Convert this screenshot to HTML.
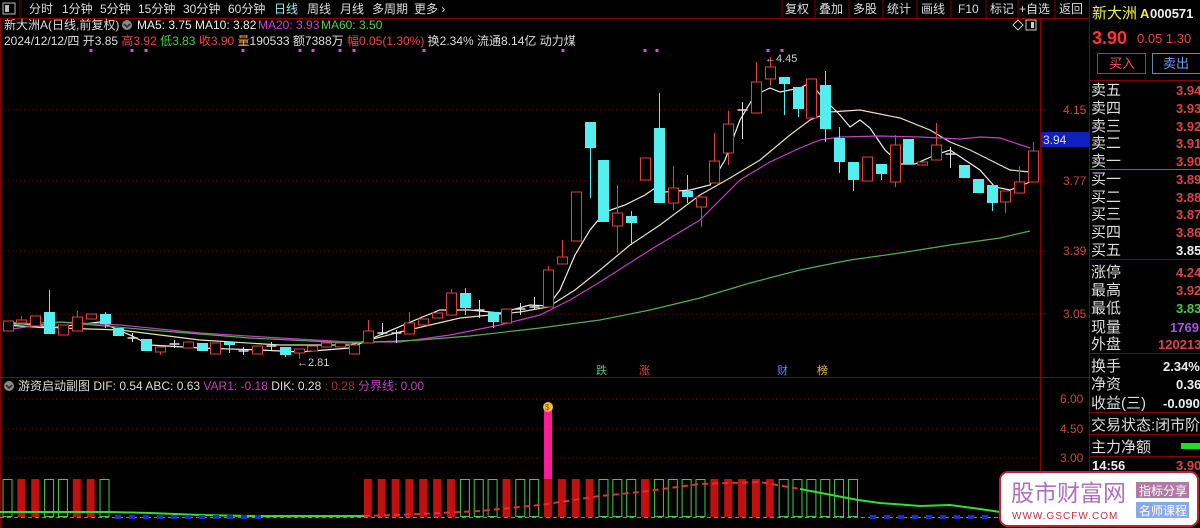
<!DOCTYPE html>
<html><head><meta charset="utf-8">
<style>
html,body{margin:0;padding:0;background:#000;width:1200px;height:528px;overflow:hidden}
svg{display:block}
text{font-family:"Liberation Sans","Noto Sans CJK SC",sans-serif}
</style></head>
<body>
<svg id="s" width="1200" height="528" viewBox="0 0 1200 528" xmlns="http://www.w3.org/2000/svg">
<rect width="1200" height="528" fill="#000"/>
<!-- toolbar -->
<g font-size="12" fill="#ddd">
<rect x="3" y="3" width="12" height="11" fill="none" stroke="#bbb"/><rect x="5" y="5" width="4" height="7" fill="#bbb"/>
<line x1="20" y1="0" x2="20" y2="18" stroke="#800"/>
<text x="29" y="13">分时</text><text x="62" y="13">1分钟</text><text x="100" y="13">5分钟</text><text x="138" y="13">15分钟</text><text x="183" y="13">30分钟</text><text x="228" y="13">60分钟</text>
<text x="274" y="13" fill="#9ee">日线</text><text x="307" y="13">周线</text><text x="340" y="13">月线</text><text x="372" y="13">多周期</text><text x="414" y="13">更多 ›</text>
<text x="785" y="13">复权</text><text x="819" y="13">叠加</text><text x="853" y="13">多股</text><text x="887" y="13">统计</text><text x="921" y="13">画线</text><text x="958" y="13">F10</text><text x="990" y="13">标记</text><text x="1019" y="13">+自选</text><text x="1059" y="13">返回</text>
</g>
<g stroke="#800"><line x1="782" y1="0" x2="782" y2="18"/><line x1="815" y1="0" x2="815" y2="18"/><line x1="849" y1="0" x2="849" y2="18"/><line x1="883" y1="0" x2="883" y2="18"/><line x1="917" y1="0" x2="917" y2="18"/><line x1="951" y1="0" x2="951" y2="18"/><line x1="986" y1="0" x2="986" y2="18"/><line x1="1018" y1="0" x2="1018" y2="18"/><line x1="1055" y1="0" x2="1055" y2="18"/>
<line x1="0" y1="18.5" x2="1090" y2="18.5"/><line x1="1040.5" y1="18" x2="1040.5" y2="528"/><line x1="1089.5" y1="0" x2="1089.5" y2="528"/><line x1="0" y1="377.5" x2="1090" y2="377.5"/><line x1="0.5" y1="18" x2="0.5" y2="528"/></g>
<path d="M1013 25l5-5 5 5-5 5z" fill="none" stroke="#ccc"/><rect x="1026" y="20" width="10" height="10" fill="none" stroke="#ccc"/><rect x="1031" y="22" width="3" height="6" fill="#ccc"/>
<!-- info -->
<g font-size="12">
<text x="4" y="29" fill="#ddd">新大洲A(日线,前复权)</text>
<circle cx="127" cy="25" r="5" fill="#888"/><path d="M124 24l3 3 3-3" stroke="#222" fill="none" stroke-width="1.5"/>
<text x="137" y="29" fill="#eee">MA5: 3.75</text><text x="195" y="29" fill="#eed">MA10: 3.82</text><text x="258" y="29" fill="#c4c">MA20: 3.93</text><text x="321" y="29" fill="#5c5">MA60: 3.50</text>
<text x="4" y="45" fill="#ddd">2024/12/12/四 开3.85 <tspan fill="#e44">高3.92</tspan> <tspan fill="#4c4">低3.83</tspan> <tspan fill="#e44">收3.90</tspan> <tspan fill="#ea4">量</tspan>190533 额7388万 <tspan fill="#e44">幅0.05(1.30%)</tspan> 换2.34% 流通8.14亿 动力煤</text>
</g>
<g id="dots" fill="#c5c"></g>
<!-- grid -->
<g stroke="#700" stroke-dasharray="1,3"><line x1="0" y1="110" x2="1040" y2="110"/><line x1="0" y1="181" x2="1040" y2="181"/><line x1="0" y1="251" x2="1040" y2="251"/><line x1="0" y1="314" x2="1040" y2="314"/>
<line x1="0" y1="399" x2="1040" y2="399"/><line x1="0" y1="429" x2="1040" y2="429"/><line x1="0" y1="458" x2="1040" y2="458"/></g>
<g font-size="12" fill="#c44"><text x="1063" y="114">4.15</text><text x="1063" y="185">3.77</text><text x="1063" y="255">3.39</text><text x="1063" y="318">3.05</text>
<text x="1060" y="403">6.00</text><text x="1060" y="433">4.50</text><text x="1060" y="462">3.00</text></g>
<g stroke="#700"><line x1="1040" y1="110" x2="1046" y2="110"/><line x1="1040" y1="181" x2="1046" y2="181"/><line x1="1040" y1="251" x2="1046" y2="251"/><line x1="1040" y1="314" x2="1046" y2="314"/></g>
<rect x="1041" y="132" width="48" height="15" fill="#1020c0"/><text x="1043" y="144" font-size="12" fill="#ddd">3.94</text>
<g id="ma" fill="none" stroke-width="1.2"></g>
<g id="cd"></g>
<g font-size="11"><text x="765" y="62" fill="#ccc">←4.45</text><text x="297" y="366" fill="#ccc">←2.81</text>
<text x="596" y="374" fill="#4c8">跌</text><text x="639" y="374" fill="#e44">涨</text><text x="777" y="374" fill="#58f">财</text><text x="817" y="374" fill="#eb4">榜</text></g>
<!-- sub header -->
<g font-size="12"><circle cx="9" cy="386" r="5" fill="#888"/><path d="M6 385l3 3 3-3" stroke="#222" fill="none" stroke-width="1.5"/>
<text x="18" y="390" fill="#ddd">游资启动副图 DIF: 0.54 ABC: 0.63 <tspan fill="#b4b">VAR1: -0.18</tspan> DIK: 0.28 <tspan fill="#a33">: 0.28</tspan> <tspan fill="#b4b">分界线: 0.00</tspan></text></g>
<g id="sb"></g>
<!-- right panel -->
<g font-size="14"><text x="1092" y="18" fill="#ee4" font-size="15">新大洲</text><text x="1140" y="18" fill="#ee4" font-size="13" font-weight="bold">A</text><text x="1150" y="18" fill="#eee" font-size="13" font-weight="bold">000571</text>
<text x="1092" y="44" fill="#f33" font-size="18" font-weight="bold">3.90</text><text x="1137" y="43" fill="#e44" font-size="13">0.05 1.30</text></g>
<rect x="1097.5" y="53.5" width="48" height="20" fill="none" stroke="#b33"/><text x="1109" y="68" font-size="13" fill="#e55">买入</text>
<rect x="1152.5" y="53.5" width="50" height="20" fill="none" stroke="#68a"/><text x="1163" y="68" font-size="13" fill="#79e">卖出</text>
<g stroke="#800"><line x1="1090" y1="80.5" x2="1200" y2="80.5"/><line x1="1090" y1="259.5" x2="1200" y2="259.5"/><line x1="1090" y1="353.5" x2="1200" y2="353.5"/><line x1="1090" y1="412.5" x2="1200" y2="412.5"/><line x1="1090" y1="434.5" x2="1200" y2="434.5"/><line x1="1090" y1="456.5" x2="1200" y2="456.5"/></g>
<line x1="1090" y1="169.5" x2="1200" y2="169.5" stroke="#569"/>
<g font-size="15" fill="#ddd">
<text x="1091" y="95">卖五</text><text x="1091" y="113">卖四</text><text x="1091" y="131">卖三</text><text x="1091" y="148">卖二</text><text x="1091" y="166">卖一</text>
<text x="1091" y="184">买一</text><text x="1091" y="202">买二</text><text x="1091" y="219">买三</text><text x="1091" y="237">买四</text><text x="1091" y="255">买五</text>
<text x="1091" y="277">涨停</text><text x="1091" y="295">最高</text><text x="1091" y="313">最低</text><text x="1091" y="332">现量</text><text x="1091" y="349">外盘</text>
<text x="1091" y="371">换手</text><text x="1091" y="389">净资</text><text x="1091" y="408">收益(三)</text>
<text x="1091" y="430">交易状态:闭市阶</text><text x="1091" y="452">主力净额</text></g>
<rect x="1181" y="443" width="19" height="6" fill="#2d2"/>
<g font-size="13" font-weight="bold" fill="#d44">
<text x="1176" y="95">3.94</text><text x="1176" y="113">3.93</text><text x="1176" y="131">3.92</text><text x="1176" y="148">3.91</text><text x="1176" y="166">3.90</text>
<text x="1176" y="184">3.89</text><text x="1176" y="202">3.88</text><text x="1176" y="219">3.87</text><text x="1176" y="237">3.86</text><text x="1176" y="255" fill="#eee">3.85</text>
<text x="1176" y="277">4.24</text><text x="1176" y="295">3.92</text><text x="1176" y="313" fill="#4c4">3.83</text><text x="1170" y="332" fill="#a5d">1769</text><text x="1158" y="349">120213</text>
<text x="1163" y="371" fill="#eee">2.34%</text><text x="1176" y="389" fill="#eee">0.36</text><text x="1163" y="408" fill="#eee">-0.090</text>
<text x="1092" y="470" fill="#eee">14:56</text><text x="1176" y="470">3.90</text></g>
<!-- watermark -->
<rect x="1000" y="472" width="198" height="54" rx="8" fill="#fff" stroke="#c02030" stroke-width="2"/>
<text x="1011" y="501" font-size="23" fill="#b070c0" font-family="Liberation Serif,'Noto Serif CJK SC',serif">股市财富网</text>
<text x="1012" y="519" font-size="10" fill="#c03040" font-family="Liberation Serif,serif" letter-spacing="1">WWW.GSCFW.COM</text>
<rect x="1136" y="482" width="53" height="16" fill="#b07aa5"/><text x="1139" y="495" font-size="12" fill="#fff">指标分享</text>
<rect x="1136" y="502" width="53" height="16" fill="#88a8e8"/><text x="1139" y="515" font-size="12" fill="#fff">名师课程</text>
</svg>
<script>
var NS="http://www.w3.org/2000/svg";
function el(p,t,a){var e=document.createElementNS(NS,t);for(var k in a)e.setAttribute(k,a[k]);p.appendChild(e);return e;}
var X=function(i){return 7.5+13.86*i;};
// type, top, bottom, wickTop, wickBot
var C=[
['r',321,331],['r',320,323,316],['r',316,326],['c',312,334,290],['r',325,335],['r',317,331,311],['r',314,319],['c',314,324,312,328],['c',328,336],['x',338,338,333,342],
['c',339,351],['r',347,352,347,355],['x',344,344,340,348],['r',342,348],['c',343,351],['r',343,354],['c',342,345,342,353],['x',351,351,347,355],['r',346,354],['x',346,346,342,350],
['c',347,355,347,357],['r',349,353,349,359],['r',346,351],['r',343,347],['r',343,347],['r',345,354],['r',331,343,320],['x',333,333,323,335],['x',333,333,330,343],['r',323,334,312],
['r',319,325],['r',313,318],['r',293,315,289],['c',293,308,288,315],['x',310,310,300,318],['c',312,322,312,328],['r',309,323],['x',309,309,303,315],['x',307,307,297,310],['r',270,307,266],
['r',257,264,240],['r',192,241],['c',122,148,122,198],['c',160,222],['r',213,226,185,253],['c',216,223,211,245],['r',158,180],['c',128,203,93],['r',188,203,166,210],['c',191,197,175,203],
['r',197,207,197,227],['r',161,183,133],['r',124,153,111,165],['x',110,110,102,139],['r',82,113,62],['r',67,79,57,86],['c',77,84,77,115],['c',87,109,87,117],['r',79,118],['c',85,129,71,142],
['c',138,162,127,173],['c',162,180,162,191],['r',157,181],['c',164,174,164,180],['r',145,182,135,187],['c',139,164],['r',162,165],['r',145,160,123],['x',154,154,147,168],['c',165,178],
['c',179,193],['c',185,203,185,211],['r',191,202,191,213],['r',182,193,166],['r',151,182,142]
];
var g=document.getElementById('cd');
C.forEach(function(c,i){var x=Math.round(X(i))+0.5;var t=c[1],b=c[2],wt=c[3]||t,wb=c[4]||b;
 var col=c[0]=='r'?'#e04040':(c[0]=='c'?'#55eeee':'#ddd');
 el(g,'line',{x1:x,y1:wt,x2:x,y2:wb,stroke:col});
 if(c[0]=='x'){el(g,'line',{x1:x-5,y1:t,x2:x+5,y2:t,stroke:col,'stroke-width':1.5});}
 else if(c[0]=='r'){el(g,'rect',{x:x-5,y:t,width:10,height:Math.max(b-t,2),fill:'#000',stroke:col});}
 else el(g,'rect',{x:x-5.5,y:t,width:11,height:Math.max(b-t,2),fill:col});
});
var M={
'#f0f0f0':[[5,325],[50,328],[100,322],[130,335],[150,345],[200,348],[260,350],[300,352],[350,348],[380,335],[420,318],[440,310],[470,310],[500,313],[530,305],[548,306],[560,290],[575,255],[590,230],[605,212],[625,205],[645,195],[655,188],[665,192],[690,190],[710,185],[725,160],[740,120],[755,95],[770,88],[780,92],[800,88],[810,83],[825,100],[840,115],[850,127],[860,120],[870,128],[885,150],[900,164],[915,164],[935,155],[950,150],[965,160],[980,170],[995,187],[1010,190],[1030,182]],
'#e8e0c0':[[5,322],[60,328],[120,330],[200,340],[280,345],[350,345],[400,332],[460,318],[520,312],[548,307],[575,290],[600,270],[630,245],[660,225],[700,195],[730,178],[760,160],[790,135],[810,120],[830,112],[860,110],[900,118],[930,130],[950,142],[970,150],[990,160],[1010,170],[1030,172]],
'#c040c0':[[5,330],[60,322],[120,325],[200,333],[280,338],[350,342],[400,342],[450,335],[500,325],[540,315],[570,300],[600,282],[650,250],[700,220],[740,180],[770,162],[800,148],[820,140],[840,137],[880,136],[920,137],[960,139],[980,137],[1000,138],[1030,148]],
'#50b050':[[5,325],[60,322],[150,330],[250,338],[350,343],[420,340],[470,336],[540,328],[600,320],[650,310],[700,298],[750,283],[800,270],[850,260],[900,253],[950,245],[1000,238],[1030,231]]};
var mg=document.getElementById('ma');
for(var k in M){el(mg,'polyline',{points:M[k].map(function(p){return p.join(',')}).join(' '),stroke:k});}
var dg=document.getElementById('dots');
[91,132,146,243,300,313,340,354,424,563,645,657,768,782].forEach(function(x){el(dg,'rect',{x:x-1.5,y:49,width:3,height:3});});
// sub chart
var sb=document.getElementById('sb');
el(sb,'line',{x1:0,y1:517.5,x2:1040,y2:517.5,stroke:'#a6a','stroke-dasharray':'4,3'});
var P={0:'g',1:'r',2:'r',3:'g',4:'g',5:'r',6:'r',7:'g'};
var pat='RRRRRRRGGGRGGRRRRGGGRGGGGRRRRRGGGGGG';
for(var i=26;i<62;i++)P[i]=pat[i-26]=='R'?'r':'g';
for(var i in P){var x=X(+i);
 if(P[i]=='r')el(sb,'rect',{x:x-4,y:479,width:8,height:38,fill:'#c01010'});
 else el(sb,'rect',{x:x-4.5,y:479.5,width:9,height:37,fill:'none',stroke:'#4c4'});}
el(sb,'rect',{x:X(39)-4,y:405,width:8,height:74,fill:'#ff1a9a'});
el(sb,'circle',{cx:X(39),cy:407,r:5,fill:'#e8c040'});
el(sb,'text',{x:X(39)-3,y:410,'font-size':8,fill:'#a40'}).textContent='$';
el(sb,'polyline',{points:'0,512 110,512 150,513 200,515 250,516 300,516 364,516',fill:'none',stroke:'#3d3','stroke-width':2});
el(sb,'polyline',{points:'364,516 420,514 480,511 540,505 600,496 640,492 700,484 760,482 800,489',fill:'none',stroke:'#e03030','stroke-width':2,'stroke-dasharray':'6,4'});
el(sb,'polyline',{points:'800,489 858,500 880,503 920,506 950,505 980,509 1000,512 1040,515',fill:'none',stroke:'#3d3','stroke-width':2});
[[115,262],[870,990]].forEach(function(r){for(var x=r[0];x<r[1];x+=14)el(sb,'rect',{x:x,y:515,width:6,height:4,fill:'#1030e0'});});
</script>
</body></html>
